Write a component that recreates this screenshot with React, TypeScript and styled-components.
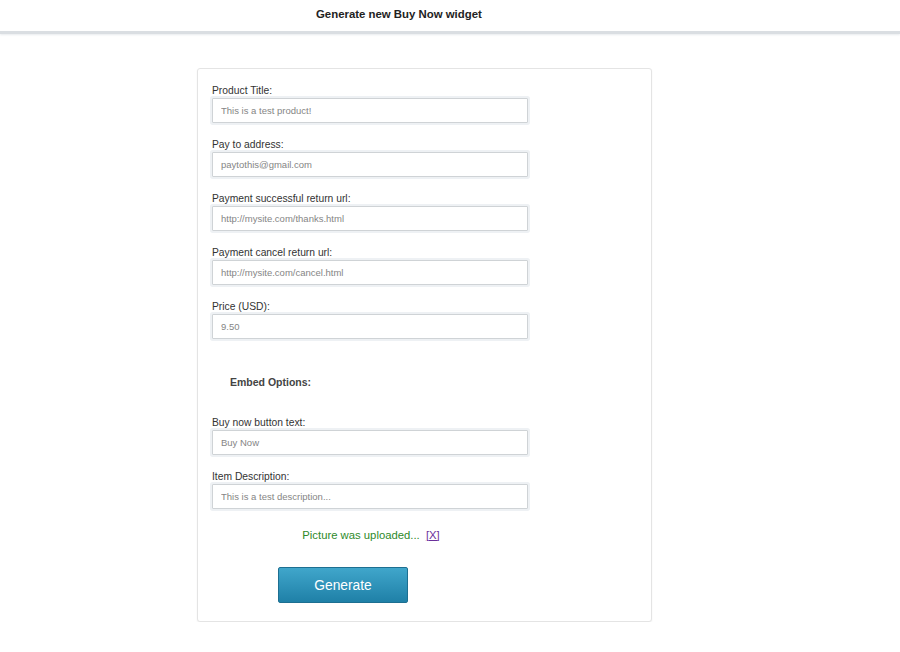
import styled, { createGlobalStyle } from 'styled-components'

const GlobalStyle = createGlobalStyle`
	body {
		margin: 0;
		background: #ffffff;
		font-family: 'Liberation Sans', Arial, sans-serif;
	}
`

const fields = [
	{ label: 'Product Title:', placeholder: 'This is a test product!' },
	{ label: 'Pay to address:', placeholder: 'paytothis@gmail.com' },
	{ label: 'Payment successful return url:', placeholder: 'http://mysite.com/thanks.html' },
	{ label: 'Payment cancel return url:', placeholder: 'http://mysite.com/cancel.html' },
	{ label: 'Price (USD):', placeholder: '9.50' },
]

const embedFields = [
	{ label: 'Buy now button text:', placeholder: 'Buy Now' },
	{ label: 'Item Description:', placeholder: 'This is a test description...' },
]

const Field = ({ label, placeholder }: { label: string; placeholder: string }) => (
	<FieldRow>
		<Label>{label}</Label>
		<TextInput type="text" placeholder={placeholder} />
	</FieldRow>
)

export default function App() {
	return (
		<>
			<GlobalStyle />
			<Header>
				<Title>Generate new Buy Now widget</Title>
			</Header>

			<Card>
				{fields.map((f) => (
					<Field key={f.label} {...f} />
				))}

				<SectionTitle>Embed Options:</SectionTitle>

				{embedFields.map((f) => (
					<Field key={f.label} {...f} />
				))}

				<Status>
					Picture was uploaded... <RemoveLink href="#">[X]</RemoveLink>
				</Status>

				<GenerateButton type="button">Generate</GenerateButton>
			</Card>
		</>
	)
}

const Header = styled.header`
	height: 31px;
	background: #fff;
	border-bottom: 3px solid #dadee2;
	box-shadow: 0 1px 2px #e8ebee;
	display: flex;
	align-items: center;
	padding-left: 316px;
`

const Title = styled.h1`
	margin: 0 0 3px 0;
	font-size: 11.4px;
	font-weight: bold;
	color: #222;
`

const Card = styled.main`
	display: flex;
	flex-direction: column;
	align-items: flex-start;
	width: 425px;
	margin: 34px 0 0 197px;
	padding: 15px 14px 18px 14px;
	background: #fff;
	border: 1px solid #e4e4e4;
	border-radius: 3px;
	box-shadow: 0 1px 2px rgba(0, 0, 0, 0.06);
`

const FieldRow = styled.div`
	display: flex;
	flex-direction: column;
	margin-bottom: 15px;
`

const Label = styled.label`
	font-size: 10.3px;
	line-height: 13px;
	color: #333;
`

const TextInput = styled.input`
	box-sizing: border-box;
	width: 316px;
	height: 25px;
	margin: 1px 0 0 0;
	padding: 0 8px;
	font-family: 'Liberation Sans', Arial, sans-serif;
	font-size: 9.5px;
	color: #555;
	background: #fff;
	border: 1px solid #cfd3d6;
	border-radius: 1px;
	box-shadow: 0 0 0 2px #eef1f4;
	outline: none;

	&::placeholder {
		color: #858585;
	}
`

const SectionTitle = styled.h3`
	margin: 22px 0 27px 18px;
	font-size: 10.5px;
	line-height: 13px;
	font-weight: bold;
	color: #444;
`

const Status = styled.p`
	width: 318px;
	margin: 4px 0 0 0;
	text-align: center;
	font-size: 11.3px;
	line-height: 14px;
	color: #2e8a2a;
`

const RemoveLink = styled.a`
	margin-left: 3px;
	color: #6a2f9a;
	text-decoration: underline;
`

const GenerateButton = styled.button`
	display: block;
	width: 130px;
	height: 36px;
	margin: 25px 0 0 66px;
	font-family: 'Liberation Sans', Arial, sans-serif;
	font-size: 13.8px;
	color: #fff;
	background: linear-gradient(to bottom, #40a6cb, #1f80a7);
	border: 1px solid #1d6f91;
	border-radius: 2px;
	cursor: pointer;
`
